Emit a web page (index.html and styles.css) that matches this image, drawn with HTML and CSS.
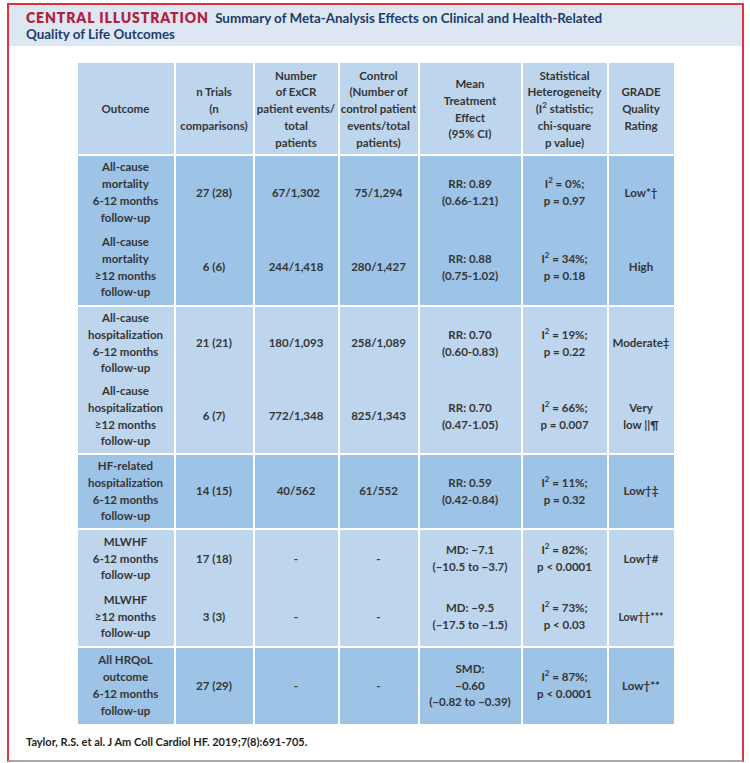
FILE: index.html
```html
<!DOCTYPE html>
<html>
<head>
<meta charset="utf-8">
<link rel="stylesheet" href="styles.css">
</head>
<body>
<div class="frame">
  <div class="band">
    <span class="tag">CENTRAL ILLUSTRATION</span>
    <span class="title">Summary of Meta-Analysis Effects on Clinical and Health-Related<br>Quality of Life Outcomes</span>
  </div>
  <div class="tablewrap">
    <table class="meta">
      <colgroup>
        <col class="c1"><col class="c2"><col class="c3"><col class="c4"><col class="c5"><col class="c6"><col class="c7">
      </colgroup>
      <thead>
        <tr class="hrow">
          <th>Outcome</th>
          <th>n Trials<br>(n<br>comparisons)</th>
          <th>Number<br>of ExCR<br>patient events/<br>total<br>patients</th>
          <th>Control<br>(Number of<br>control patient<br>events/total<br>patients)</th>
          <th>Mean<br>Treatment<br>Effect<br>(95% CI)</th>
          <th>Statistical<br>Heterogeneity<br>(I<sup>2</sup> statistic;<br>chi-square<br>p value)</th>
          <th>GRADE<br>Quality<br>Rating</th>
        </tr>
      </thead>
      <tbody class="dark">
        <tr class="r74">
          <td>All-cause<br>mortality<br>6-12 months<br>follow-up</td>
          <td>27 (28)</td><td>67/1,302</td><td>75/1,294</td>
          <td>RR: 0.89<br>(0.66-1.21)</td>
          <td>I<sup>2</sup> = 0%;<br>p = 0.97</td>
          <td>Low*†</td>
        </tr>
        <tr class="r75">
          <td>All-cause<br>mortality<br>≥12 months<br>follow-up</td>
          <td>6 (6)</td><td>244/1,418</td><td>280/1,427</td>
          <td>RR: 0.88<br>(0.75-1.02)</td>
          <td>I<sup>2</sup> = 34%;<br>p = 0.18</td>
          <td>High</td>
        </tr>
      </tbody>
      <tbody class="light">
        <tr class="r73">
          <td>All-cause<br>hospitalization<br>6-12 months<br>follow-up</td>
          <td>21 (21)</td><td>180/1,093</td><td>258/1,089</td>
          <td>RR: 0.70<br>(0.60-0.83)</td>
          <td>I<sup>2</sup> = 19%;<br>p = 0.22</td>
          <td>Moderate‡</td>
        </tr>
        <tr class="r73">
          <td>All-cause<br>hospitalization<br>≥12 months<br>follow-up</td>
          <td>6 (7)</td><td>772/1,348</td><td>825/1,343</td>
          <td>RR: 0.70<br>(0.47-1.05)</td>
          <td>I<sup>2</sup> = 66%;<br>p = 0.007</td>
          <td>Very<br>low ||¶</td>
        </tr>
      </tbody>
      <tbody class="dark">
        <tr class="r73">
          <td>HF-related<br>hospitalization<br>6-12 months<br>follow-up</td>
          <td>14 (15)</td><td>40/562</td><td>61/552</td>
          <td>RR: 0.59<br>(0.42-0.84)</td>
          <td>I<sup>2</sup> = 11%;<br>p = 0.32</td>
          <td>Low†‡</td>
        </tr>
      </tbody>
      <tbody class="light">
        <tr class="r58">
          <td>MLWHF<br>6-12 months<br>follow-up</td>
          <td>17 (18)</td><td>-</td><td>-</td>
          <td>MD: −7.1<br>(−10.5 to −3.7)</td>
          <td>I<sup>2</sup> = 82%;<br>p &lt; 0.0001</td>
          <td>Low†#</td>
        </tr>
        <tr class="r58">
          <td>MLWHF<br>≥12 months<br>follow-up</td>
          <td>3 (3)</td><td>-</td><td>-</td>
          <td>MD: −9.5<br>(−17.5 to −1.5)</td>
          <td>I<sup>2</sup> = 73%;<br>p &lt; 0.03</td>
          <td class="small">Low††***</td>
        </tr>
      </tbody>
      <tbody class="dark">
        <tr class="r76">
          <td>All HRQoL<br>outcome<br>6-12 months<br>follow-up</td>
          <td>27 (29)</td><td>-</td><td>-</td>
          <td>SMD:<br>−0.60<br>(−0.82 to −0.39)</td>
          <td>I<sup>2</sup> = 87%;<br>p &lt; 0.0001</td>
          <td>Low†**</td>
        </tr>
      </tbody>
    </table>
  </div>
  <div class="cite">Taylor, R.S. et al. J Am Coll Cardiol HF. 2019;7(8):691-705.</div>
</div>
</body>
</html>
```
FILE: styles.css
```css
html, body {
  margin: 0;
  padding: 0;
  background: #ffffff;
}
body {
  font-family: Lato, "Noto Sans", sans-serif;
  color: #333333;
}
.frame {
  box-sizing: border-box;
  margin: 3px 6px 0 7px;
  height: 759px;
  border: 2px solid #e0323f;
  border-bottom: 2px solid #a8a8a8;
  display: flex;
  flex-direction: column;
}
.band {
  background: #dde7f2;
  padding: 5px 9px 0 17px;
  height: 36px;
  font-size: 13.4px;
  line-height: 16px;
  font-weight: 700;
}
.tag {
  color: #b3203a;
  font-size: 14px;
  letter-spacing: 0.9px;
  font-weight: 800;
  margin-right: 3px;
}
.title {
  color: #1d3c6c;
}
.tablewrap {
  display: flex;
  justify-content: center;
  padding-top: 17px;
}
.meta {
  border-collapse: separate;
  border-spacing: 0;
  table-layout: fixed;
  width: 596px;
  font-size: 11.5px;
  line-height: 16.8px;
  font-weight: 700;
  color: #353535;
  text-align: center;
}
.c1 { width: 98px; }
.c2 { width: 79px; }
.c3 { width: 85px; }
.c4 { width: 80px; }
.c5 { width: 103px; }
.c6 { width: 86px; }
.c7 { width: 65px; }
.meta th, .meta td {
  padding: 0;
  vertical-align: middle;
  border-right: 2px solid #ffffff;
  font-weight: 700;
  white-space: nowrap;
}
.meta th:last-child, .meta td:last-child {
  border-right: 0;
}
.meta th {
  background: #bdd6ee;
  height: 91px;
  padding-top: 2px;
  box-sizing: border-box;
}
.meta sup {
  font-size: 8px;
  line-height: 0;
  vertical-align: 5px;
}
.dark td { background: #9dc3e7; }
.light td { background: #bdd6ee; }
.meta tbody tr:first-child td {
  border-top: 2px solid #ffffff;
}
.r74 td { height: 74px; }
.r75 td { height: 75px; }
.r73 td { height: 73px; }
.r58 td { height: 58px; }
.r76 td { height: 76px; }
.meta td.small { font-size: 10.5px; }
.cite {
  padding: 11px 9px 0 17px;
  font-size: 11px;
  font-weight: 700;
  color: #1e1e1e;
}
```
